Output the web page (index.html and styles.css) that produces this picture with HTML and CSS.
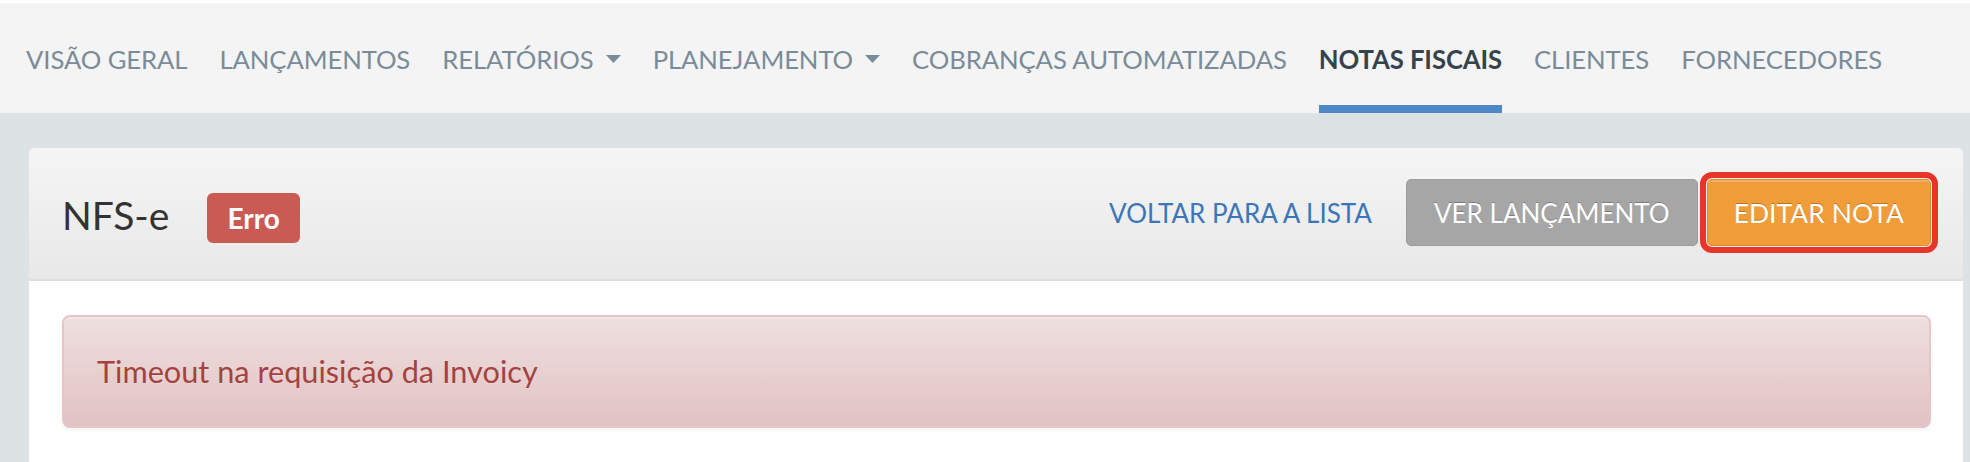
FILE: index.html
```html
<!DOCTYPE html>
<html lang="pt-BR">
<head>
<meta charset="utf-8">
<title>NFS-e</title>
<link rel="stylesheet" href="styles.css">
</head>
<body>
<header class="topbar">
  <nav class="nav">
    <a class="nav-item">VISÃO GERAL</a>
    <a class="nav-item">LANÇAMENTOS</a>
    <a class="nav-item">RELATÓRIOS <svg class="caret" viewBox="0 0 15 8"><path d="M0 0H15L7.5 8Z"/></svg></a>
    <a class="nav-item">PLANEJAMENTO <svg class="caret" viewBox="0 0 15 8"><path d="M0 0H15L7.5 8Z"/></svg></a>
    <a class="nav-item">COBRANÇAS AUTOMATIZADAS</a>
    <a class="nav-item active">NOTAS FISCAIS</a>
    <a class="nav-item">CLIENTES</a>
    <a class="nav-item">FORNECEDORES</a>
  </nav>
</header>
<main class="page">
  <section class="panel">
    <div class="panel-heading">
      <div class="title-group">
        <h1 class="title">NFS-e</h1>
        <span class="badge">Erro</span>
      </div>
      <div class="actions">
        <a class="link">VOLTAR PARA A LISTA</a>
        <a class="btn btn-gray">VER LANÇAMENTO</a>
        <span class="highlight"><a class="btn btn-orange">EDITAR NOTA</a></span>
      </div>
    </div>
    <div class="panel-body">
      <div class="alert">Timeout na requisição da Invoicy</div>
    </div>
  </section>
</main>
</body>
</html>
```

FILE: styles.css
```css
html, body {
  margin: 0;
  padding: 0;
}
body {
  background: #dde2e5;
  font-family: Lato, "Open Sans", "Liberation Sans", sans-serif;
  overflow: hidden;
  height: 462px;
}
.topbar {
  border-top: 3px solid #ffffff;
  background: #f4f4f4;
  height: 110px;
}
.nav {
  display: flex;
  height: 110px;
  padding-left: 26px;
  gap: 32px;
}
.nav-item {
  display: flex;
  align-items: center;
  font-size: 25.7px;
  letter-spacing: -0.1px;
  color: #7a8c99;
  white-space: nowrap;
  padding-top: 2px;
}
.nav-item.active {
  color: #36434c;
  font-weight: 700;
  box-shadow: inset 0 -8px 0 #4f87c6;
}
.caret {
  width: 15px;
  height: 8px;
  margin-left: 12px;
  fill: #7a8c99;
}
.page {
  padding: 35px 7px 0 29px;
}
.panel {
  background: #ffffff;
  border-radius: 6px 6px 0 0;
  height: 400px;
}
.panel-heading {
  height: 131px;
  border-bottom: 2px solid #dedede;
  border-radius: 6px 6px 0 0;
  background: linear-gradient(to bottom, #f5f5f5, #e8e8e8);
  display: flex;
  align-items: center;
  justify-content: space-between;
  padding: 0 25px 0 33px;
}
.title-group {
  display: flex;
  align-items: center;
}
.title {
  margin: 0;
  font-size: 39px;
  font-weight: 400;
  color: #333333;
  padding-top: 2px;
}
.badge {
  margin-left: 38px;
  background: #c95a54;
  color: #ffffff;
  font-weight: 700;
  font-size: 28px;
  height: 50px;
  padding: 0 20px;
  border-radius: 6px;
  display: inline-flex;
  align-items: center;
  margin-top: 9px;
}
.actions {
  display: flex;
  align-items: center;
  margin-top: -2px;
}
.link {
  color: #3c76b6;
  font-size: 26px;
  margin-right: 34px;
}
.btn {
  display: inline-flex;
  align-items: center;
  box-sizing: border-box;
  height: 67px;
  padding: 0 27px;
  font-size: 26px;
  color: #ffffff;
  border-radius: 5px;
  text-shadow: 0 -1px 0 rgba(0, 0, 0, 0.25);
  white-space: nowrap;
}
.btn-gray {
  background: #a6a6a6;
  border: 1px solid #9d9d9d;
}
.highlight {
  margin-left: 2px;
  border: 6px solid #e8352a;
  border-radius: 12px;
  padding: 1px;
  display: inline-flex;
}
.btn-orange {
  background: #f09c38;
  border: 1px solid #e38c2a;
  box-shadow: inset 0 2px 0 rgba(255, 255, 255, 0.2);
  font-size: 26.5px;
  padding: 0 26px;
}
.panel-body {
  padding: 34px 32px 0 33px;
}
.alert {
  box-sizing: border-box;
  height: 113px;
  border: 2px solid #e5c6c8;
  border-radius: 8px;
  background: linear-gradient(to bottom, #eedfdf, #e2c2c3);
  box-shadow: inset 0 2px 0 rgba(255, 255, 255, 0.25), 0 2px 4px rgba(0, 0, 0, 0.05);
  color: #a5423f;
  font-size: 30.7px;
  padding: 0 33px;
  display: flex;
  align-items: center;
  text-shadow: 0 1px 0 rgba(255, 255, 255, 0.2);
}
```
